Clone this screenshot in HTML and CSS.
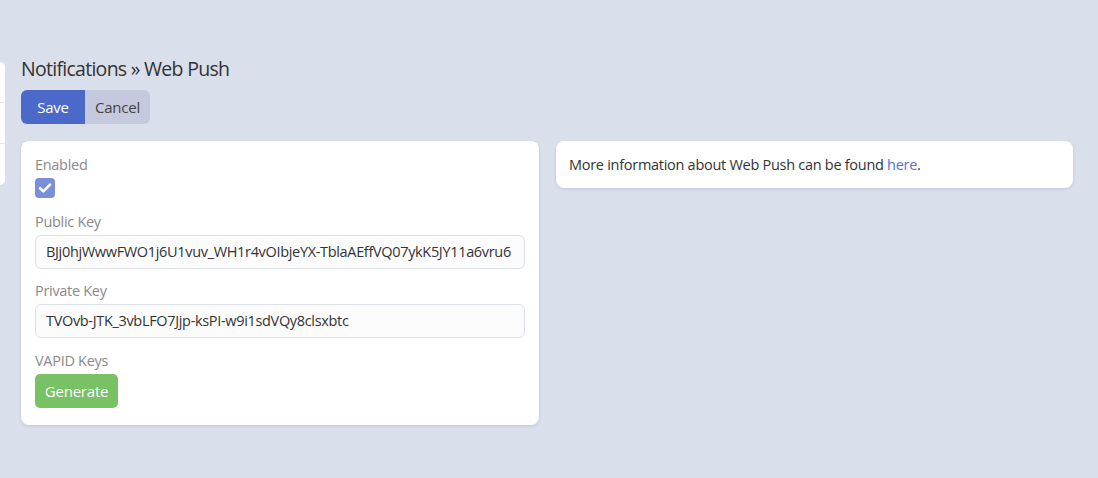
FILE: index.html
```html
<!DOCTYPE html>
<html>
<head>
<meta charset="utf-8">
<link rel="stylesheet" href="styles.css">
</head>
<body>
<div class="layout">
  <aside class="sidebar">
    <div class="side-item"></div>
    <div class="side-item"></div>
    <div class="side-item"></div>
  </aside>
  <main class="main">
    <h1 class="title">Notifications » Web Push</h1>
    <div class="btn-group">
      <button class="btn btn-primary">Save</button>
      <button class="btn btn-secondary">Cancel</button>
    </div>
    <div class="columns">
      <section class="card form-card">
        <div class="field check-field">
          <label class="label">Enabled</label>
          <span class="checkbox">
            <svg width="14" height="12" viewBox="0 0 14 12"><path d="M2 6.2 L5.4 9.4 L12 2.6" fill="none" stroke="#fff" stroke-width="2.6" stroke-linecap="round" stroke-linejoin="round"/></svg>
          </span>
        </div>
        <div class="field">
          <label class="label">Public Key</label>
          <div class="input">BJj0hjWwwFWO1j6U1vuv_WH1r4vOIbjeYX-TblaAEffVQ07ykK5JY11a6vru6</div>
        </div>
        <div class="field">
          <label class="label">Private Key</label>
          <div class="input">TVOvb-JTK_3vbLFO7Jjp-ksPI-w9i1sdVQy8clsxbtc</div>
        </div>
        <div class="field last">
          <label class="label">VAPID Keys</label>
          <button class="btn btn-success">Generate</button>
        </div>
      </section>
      <section class="card info-card">
        More information about Web Push can be found <a class="link" href="#">here</a>.
      </section>
    </div>
  </main>
</div>
</body>
</html>
```

FILE: styles.css
```css
* { box-sizing: border-box; }
html, body { margin: 0; padding: 0; }
body {
  background: #d9dfeb;
  font-family: "Open Sans", "Noto Sans", sans-serif;
  color: #333;
  height: 478px;
  overflow: hidden;
}
.layout {
  display: flex;
  align-items: flex-start;
}
.sidebar {
  width: 5px;
  margin-top: 62px;
  background: #fff;
  border-radius: 0 5px 5px 0;
  display: flex;
  flex-direction: column;
}
.side-item {
  height: 41px;
  border-bottom: 1px solid #e3e6ee;
}
.side-item:last-child { border-bottom: none; }
.main {
  flex: 1;
  padding: 55px 25px 0 16px;
}
.title {
  margin: 0;
  font-size: 19.5px;
  font-weight: 400;
  line-height: 28px;
  letter-spacing: -0.72px;
  color: #333;
}
.btn-group {
  display: flex;
  margin-top: 7px;
}
.btn {
  font-family: inherit;
  font-size: 15px;
  border: none;
  height: 34px;
  padding: 0;
  line-height: 34px;
  letter-spacing: -0.2px;
  cursor: pointer;
}
.btn-primary {
  background: #4a69c9;
  color: #fff;
  border-radius: 6px 0 0 6px;
  width: 64px;
}
.btn-secondary {
  background: #c4c9de;
  color: #444;
  border-radius: 0 6px 6px 0;
  width: 65px;
}
.columns {
  display: grid;
  grid-template-columns: 518px 1fr;
  gap: 17px;
  margin-top: 17px;
  align-items: start;
}
.card {
  background: #fff;
  border-radius: 8px;
  box-shadow: 0 1px 3px rgba(80, 90, 120, 0.18);
}
.form-card {
  padding: 14px 14px 17px;
}
.field { margin-bottom: 12px; }
.field.check-field { margin-bottom: 14px; }
.field.last { margin-bottom: 0; margin-top: 13px; }
.label {
  display: block;
  font-size: 14.5px;
  line-height: 20px;
  letter-spacing: -0.3px;
  color: #8a8a8a;
  margin-bottom: 3px;
}
.checkbox {
  display: flex;
  align-items: center;
  justify-content: center;
  width: 20px;
  height: 20px;
  border-radius: 4px;
  background: #7b8fd8;
}
.input {
  height: 34px;
  border: 1px solid #dde1ea;
  border-radius: 6px;
  padding: 0 10px;
  font-size: 14.5px;
  line-height: 32px;
  letter-spacing: -0.33px;
  color: #333;
  background: #fcfcfd;
  white-space: nowrap;
  overflow: hidden;
}
.btn-success {
  background: #78c165;
  color: #fff;
  border-radius: 5px;
  width: 83px;
}
.info-card {
  padding: 13px 13px;
  font-size: 14.5px;
  line-height: 21px;
  letter-spacing: -0.28px;
  color: #333;
}
.link {
  color: #5873cc;
  text-decoration: none;
}
```
